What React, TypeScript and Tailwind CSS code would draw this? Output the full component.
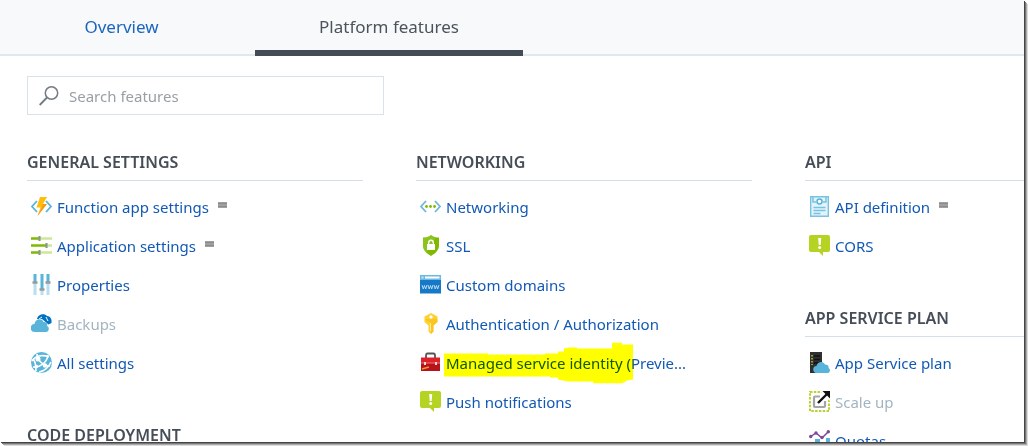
import type { ReactNode } from "react";

const icons: Record<string, ReactNode> = {
  bolt: (
    <>
      <path d="M6 5 1 10.500 6 16M15 5l5 5.500L15 16" fill="none" stroke="#59b4d9" strokeWidth="1.800" />
      <path d="M9 1h7l-4 7h4L6.500 20l3-8.500H5.500z" fill="#fdbf0a" />
      <path d="M12 8h4L6.500 20 11 11z" fill="#f79a1c" />
    </>
  ),
  sliders: (
    <>
      <path d="M0 3.500h9M0 10.500h15M0 17.500h8" stroke="#7fba00" strokeWidth="2.600" />
      <path d="M9 3.500h12M15 10.500h6M8 17.500h13" stroke="#cfe69b" strokeWidth="2.600" />
      <path d="M8.500 1v5M15.500 8v5M8.500 15v5" stroke="#8f9790" strokeWidth="2.200" />
    </>
  ),
  properties: (
    <>
      <path d="M4 0v9M11 0v15M17 0v9" stroke="#59b4d9" strokeWidth="3" />
      <path d="M4 9v12M11 15v6M17 9v12" stroke="#b8dff0" strokeWidth="3" />
      <path d="M1.500 8.500h5M8.500 15.500h5M14.500 8.500h5" stroke="#999" strokeWidth="2.400" />
    </>
  ),
  backups: (
    <>
      <path d="M6 6C7 .5 14 0 16 3c4 0 5 4 4.500 7l-3 1.500L11 6z" fill="#0072c6" />
      <path d="m8 6 3-2M15 4l2 4" stroke="#fff" />
      <path d="M4 19a4 4 0 0 1-.5-8C4 5.500 11 4.500 12.500 9c3-.5 4.500 2 3.500 4 3 1 2 6-1 6z" fill="#59b4d9" />
    </>
  ),
  globe: (
    <>
      <circle cx="10.500" cy="10.500" r="10.500" fill="#59b4d9" />
      <path d="M1 9C4 4 11 2 18 5M6 2c0 6 6 12 13 12M2 15c6 1 14-4 15-12M5 19c0-5 0-9-3-12M8 20c5-1 10-5 12-10" fill="none" stroke="#fff" strokeWidth="1.700" />
      <circle cx="7" cy="7" r="2.500" fill="#fff" />
      <circle cx="14" cy="13.500" r="2.200" fill="#fff" />
      <circle cx="5.500" cy="14.500" r="1.800" fill="#fff" />
    </>
  ),
  network: (
    <>
      <path d="M6 5 1 10.500 6 16M15 5l5 5.500L15 16" fill="none" stroke="#70b7da" strokeWidth="1.800" />
      <g fill="#7fba00">
        <circle cx="6.500" cy="10.500" r="1.400" />
        <circle cx="10.500" cy="10.500" r="1.400" />
        <circle cx="14.500" cy="10.500" r="1.400" />
      </g>
    </>
  ),
  shield: (
    <>
      <path d="M11 0c2 2 5 2.500 8 2.500v8c0 5-4 8-8 10.500-4-2.500-8-5.500-8-10.500v-8C6 2.500 9 2 11 0z" fill="#7fba00" />
      <path d="M11 0C9 2 6 2.500 3 2.500v8c0 3 1.500 5 3.500 7L16 2.300C14 2 12.500 1.500 11 0z" fill="#9acb38" fillOpacity=".5" />
      <path d="M7 9h8v6H7z" fill="#fff" />
      <path d="M8.700 9V7.500a2.300 2.300 0 0 1 4.600 0V9" fill="none" stroke="#fff" strokeWidth="1.400" />
    </>
  ),
  www: (
    <>
      <path d="M0 1h21v18.500H0z" fill="#1579c8" />
      <path d="M0 1h21v5H0z" fill="#6cb9e2" />
      <path d="M5 2.500h14.500v2H5z" fill="#fff" />
      <path d="M1.500 2.500h2v2h-2z" fill="#c9e6f5" />
      <path d="m2 11 1.300 4 1.200-3.500L5.700 15 7 11m1 0 1.200 4 1.300-3.500 1.200 3.500L13 11m1 0 1.200 4 1.300-3.500 1.200 3.500L19 11" fill="none" stroke="#b7d9f1" />
    </>
  ),
  key: (
    <>
      <path d="M11 0 17.500 3.500v5.500l-4 3.500v6L11 21l-2.500-2.500v-6l-4-3.500V3.500z" fill="#ffd02e" />
      <path d="M4.500 6h13v3l-4 3.500v6L11 21V10z" fill="#f5b70a" fillOpacity=".45" />
      <circle cx="11" cy="4" r="1.700" fill="#fff" />
      <path d="M10.500 10v8" stroke="#fff0a8" />
    </>
  ),
  toolbox: (
    <>
      <path d="M6 6V3.500Q6 1.500 7.500 1.500h6Q15 1.500 15 3.500V6" fill="none" stroke="#555" strokeWidth="1.800" />
      <path d="M1 5.500h19V12H1z" fill="#dd2029" />
      <path d="M1 11h19v8H1z" fill="#b7131c" />
      <path d="M1 11h19" stroke="#ef7b70" />
      <path d="M4 10h2v3H4zM15 10h2v3h-2z" fill="#f7d6d1" />
      <path d="m2 17 7-2" stroke="#f19b28" strokeWidth="1.500" />
    </>
  ),
  notice: (
    <>
      <path d="M2 0h17a2 2 0 0 1 2 2v13a2 2 0 0 1-2 2h-5v4l-4-4H2a2 2 0 0 1-2-2V2a2 2 0 0 1 2-2z" fill="#b4d322" />
      <path d="M9.200 3h3l-.5 7h-2z" fill="#fff" />
      <circle cx="10.700" cy="12.500" r="1.500" fill="#fff" />
    </>
  ),
  document: (
    <>
      <path d="M1.700.700h17.600v19.600H1.700z" fill="#e2f3fa" stroke="#78c3e1" strokeWidth="1.400" />
      <path d="M4 1v5h3M17 1v5h-3" fill="none" stroke="#78c3e1" strokeWidth="1.500" />
      <circle cx="10.500" cy="5.500" r="2.500" fill="#fff" stroke="#59b4d9" strokeWidth="1.500" />
      <path d="M4.500 11.500h12M4.500 14.500h12M4.500 17.500h7" stroke="#78c3e1" strokeWidth="1.300" />
    </>
  ),
  server: (
    <>
      <path d="M1 0h12v21H1z" fill="#2f2f2f" />
      <path d="M5 4h6M5 7.500h6M5 11h6" stroke="#111" strokeWidth="1.600" />
      <path d="M3 3v10" stroke="#b8d432" strokeWidth="1.400" strokeDasharray="1.500 1.500" />
      <path d="M8 21a3.500 3.500 0 0 1-.5-7c1-5 7-5 8.500-1.500 3 0 4 1.500 3.500 3.500 2.500 1 1.500 5-.5 5z" fill="#59b4d9" />
    </>
  ),
  scale: (
    <>
      <path d="M1 1h19v19H1z" fill="none" stroke="#b8d432" strokeWidth="2" strokeDasharray="2.500 1.300" />
      <path d="M11 5.500H6Q5 5.500 5 6.500V15q0 1 1 1h9q1 0 1-1v-5" fill="none" stroke="#a5a5a5" strokeWidth="2.200" />
      <path d="M11 0h10v10z" fill="#fff" />
      <path d="m9 12 9-9" stroke="#111" strokeWidth="2.400" />
      <path d="M13.500 0H21v7.500z" fill="#111" />
    </>
  ),
  quotas: (
    <>
      <path d="M1 13h4v8H1zM6 9h5v12H6zM12 12h4v9h-4zM17 8h4v13h-4z" fill="#59b4d9" />
      <path d="m1 7 6-4 6 5 7-7" fill="none" stroke="#804998" strokeWidth="1.500" />
      <g fill="#804998">
        <circle cx="1.700" cy="6.500" r="1.700" />
        <circle cx="7" cy="3" r="1.700" />
        <circle cx="13" cy="7.500" r="1.700" />
        <circle cx="19.300" cy="1.700" r="1.700" />
      </g>
    </>
  ),
};

type Feature = { label: string; icon: string; disabled?: boolean; marker?: boolean; marked?: boolean };
type Section = { title: string; items: Feature[] };

const columns: Section[][] = [
  [
    {
      title: "GENERAL SETTINGS",
      items: [
        { label: "Function app settings", icon: "bolt", marker: true },
        { label: "Application settings", icon: "sliders", marker: true },
        { label: "Properties", icon: "properties" },
        { label: "Backups", icon: "backups", disabled: true },
        { label: "All settings", icon: "globe" },
      ],
    },
    { title: "CODE DEPLOYMENT", items: [] },
  ],
  [
    {
      title: "NETWORKING",
      items: [
        { label: "Networking", icon: "network" },
        { label: "SSL", icon: "shield" },
        { label: "Custom domains", icon: "www" },
        { label: "Authentication / Authorization", icon: "key" },
        { label: "Managed service identity (Previe...", icon: "toolbox", marked: true },
        { label: "Push notifications", icon: "notice" },
      ],
    },
  ],
  [
    {
      title: "API",
      items: [
        { label: "API definition", icon: "document", marker: true },
        { label: "CORS", icon: "notice" },
      ],
    },
    {
      title: "APP SERVICE PLAN",
      items: [
        { label: "App Service plan", icon: "server" },
        { label: "Scale up", icon: "scale", disabled: true },
        { label: "Quotas", icon: "quotas" },
      ],
    },
  ],
];

function Highlight() {
  return (
    <svg className="pointer-events-none absolute top-1/2 -left-0.5 h-[41px] w-[189px] -translate-y-1/2 mix-blend-multiply" viewBox="0 0 189 41" aria-hidden="true">
      <path d="M0 11h44v1h57v-1h13V9h6V6l5-1h8v1h35V0h10v2h11v35l-6 1-5 3h-29v-2h-25l-10-2v-2h-8v-1H0z" fill="#ff0" />
    </svg>
  );
}

function FeatureRow({ item }: { item: Feature }) {
  return (
    <li className="flex h-[39px] items-center gap-[5px] pl-1">
      <svg className="size-[21px] shrink-0" viewBox="0 0 21 21" aria-hidden="true">
        {icons[item.icon]}
      </svg>
      {item.disabled ? (
        <span className="whitespace-nowrap text-[#a3b5c1]">{item.label}</span>
      ) : (
        <a href="#" className="relative whitespace-nowrap text-[#1259b5]">
          {item.label}
          {item.marked && <Highlight />}
        </a>
      )}
      {item.marker && (
        <svg className="mb-1 ml-1 h-1.5 w-[9px]" viewBox="0 0 9 6" aria-hidden="true">
          <path d="M0 0h9v6H0z" fill="#a0a0a0" />
          <path d="M0 1.500h9M0 4.500h9" stroke="#8c8c8c" />
        </svg>
      )}
    </li>
  );
}

export default function App() {
  return (
    <div className="h-screen overflow-hidden bg-white pr-1 pb-1 font-['Noto_Sans','Open_Sans',sans-serif] text-[15px] leading-6">
      <div className="flex h-full flex-col overflow-hidden bg-white shadow-[1px_1px_0_#444,2px_2px_0_#777,3px_3px_0_#aaa,4px_4px_0_#ddd]">
        <nav className="flex h-14 shrink-0 border-b-2 border-[#e0e8ed] bg-[#f8f9fb] text-[17px]">
          <a href="#" className="-mb-0.5 flex w-[255px] items-center justify-center pr-3 pb-0.5 text-[#1b66bd]">
            Overview
          </a>
          <a href="#" aria-current="page" className="-mb-0.5 flex w-[268px] items-center justify-center border-b-[6px] border-[#424b56] pt-1 text-[#4b535c]">
            Platform features
          </a>
        </nav>
        <main className="min-h-0 flex-1 overflow-hidden pt-5 pl-[27px]">
          <label className="flex h-[39px] w-[357px] items-center gap-2.5 border border-[#d7e2ea] pl-[11px]">
            <svg className="size-5 shrink-0" viewBox="0 0 20 20" fill="none" stroke="#747b83" strokeWidth="1.500" aria-hidden="true">
              <circle cx="12.500" cy="7" r="6.200" />
              <path d="M8 11.500.700 19" strokeWidth="1.800" />
            </svg>
            <input type="search" aria-label="Search features" placeholder="Search features" className="min-w-0 flex-1 bg-transparent outline-none placeholder:text-[#9a9fa5]" />
          </label>
          <div className="flex gap-[53px] pt-7">
            {columns.map((sections) => (
              <div key={sections[0].title} className="flex w-[336px] shrink-0 flex-col gap-[34px]">
                {sections.map((section) => (
                  <section key={section.title}>
                    <h2 className="flex h-[38px] items-center border-b border-[#d4dfe7] text-base font-semibold text-[#454d57]">{section.title}</h2>
                    <ul className="pt-1.5">
                      {section.items.map((item) => (
                        <FeatureRow key={item.label} item={item} />
                      ))}
                    </ul>
                  </section>
                ))}
              </div>
            ))}
          </div>
        </main>
      </div>
    </div>
  );
}
